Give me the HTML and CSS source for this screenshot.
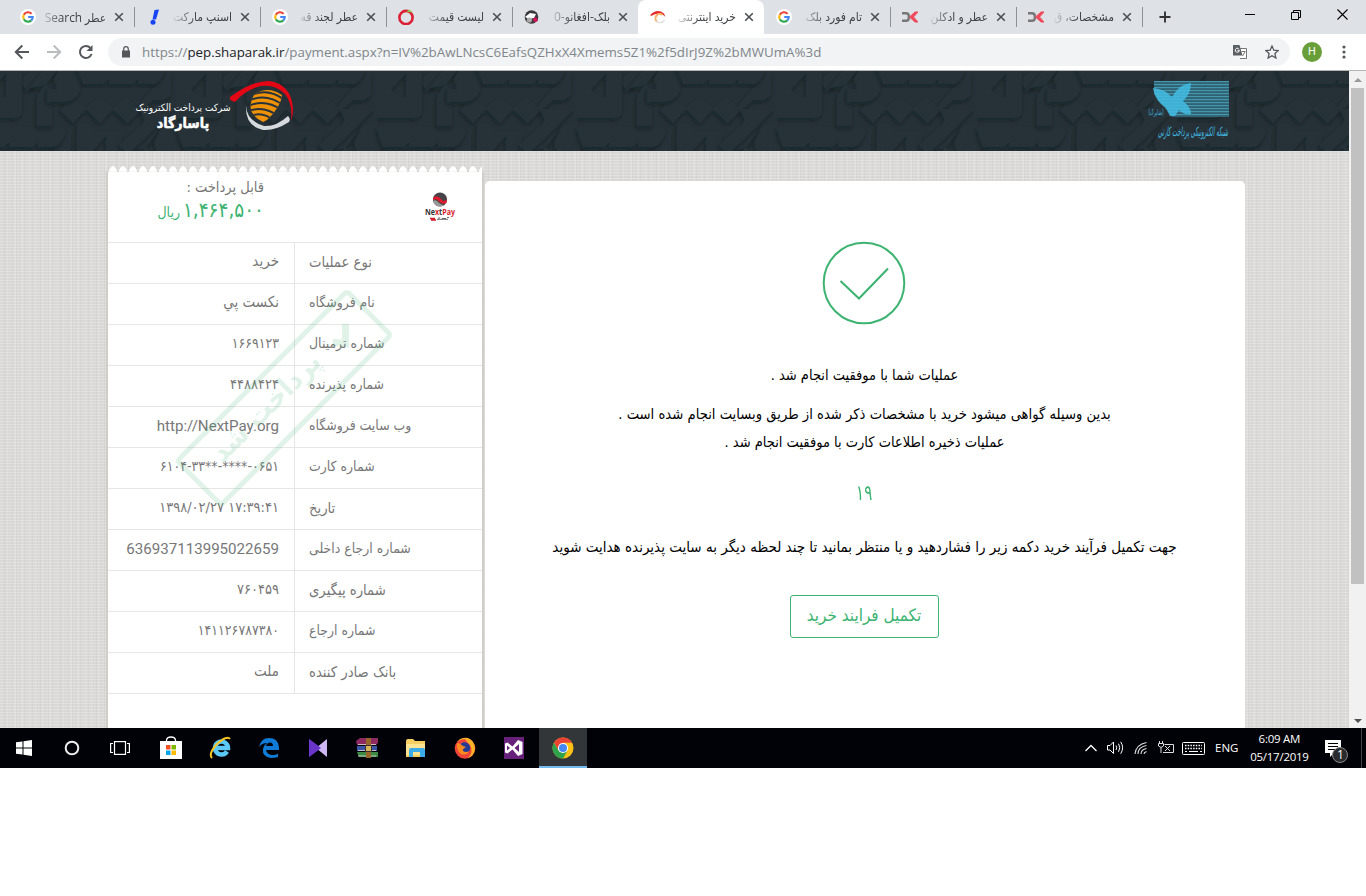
FILE: index.html
```html
<!DOCTYPE html>
<html lang="fa">
<head>
<meta charset="utf-8">
<title>خرید اینترنتی</title>
<link rel="stylesheet" href="styles.css">
</head>
<body>
<svg class="defs" width="0" height="0">
  <defs>
    <symbol id="google" viewBox="0 0 16 16">
      <circle cx="8" cy="8" r="8" fill="#fff"/>
      <g fill="none" stroke-width="2.2">
        <path d="M11.6 4.9A4.8 4.8 0 0 0 3.8 5.7" stroke="#ea4335"/>
        <path d="M3.8 5.7A4.8 4.8 0 0 0 3.8 10.3" stroke="#fbbc05"/>
        <path d="M3.8 10.3A4.8 4.8 0 0 0 11.3 11.4" stroke="#34a853"/>
        <path d="M11.3 11.4A4.8 4.8 0 0 0 12.7 8H8.2" stroke="#4285f4"/>
      </g>
    </symbol>
    <symbol id="digi" viewBox="0 0 16 12">
      <path d="M0 2.2H4Q6.8 2.2 6.8 5V7Q6.8 9.8 4 9.8H0" fill="none" stroke="#777" stroke-width="2.4"/>
      <path d="M7.5 6L13 1H16L11.5 6L16 11H13Z" fill="#f04a5d" stroke="#f04a5d"/>
    </symbol>
    <symbol id="close" viewBox="0 0 10 10"><path d="M1.2 1.2L8.8 8.8M8.8 1.2L1.2 8.8" stroke="#4c5054" stroke-width="1.6"/></symbol>
  </defs>
</svg>

<div class="tabs">
  <div class="tab"><svg class="fav"><use href="#google"/></svg><span class="title short-fade" dir="rtl">عطر Search</span><svg class="x"><use href="#close"/></svg></div>
  <div class="tab"><svg class="fav" viewBox="0 0 16 16"><path d="M8.500 1L13 .5L10 10.500H6.500Z" fill="#1744f5"/><circle cx="7" cy="13.300" r="2.500" fill="#1744f5"/></svg><span class="title" dir="rtl">اسنپ مارکت</span><svg class="x"><use href="#close"/></svg></div>
  <div class="tab"><svg class="fav"><use href="#google"/></svg><span class="title" dir="rtl">عطر لجند قه</span><svg class="x"><use href="#close"/></svg></div>
  <div class="tab"><svg class="fav" viewBox="0 0 16 16"><circle cx="8" cy="8.500" r="6.600" fill="none" stroke="#dc1f35" stroke-width="2.600"/><path d="M8.500 3L15 3.500L11 .5Z" fill="#8bc34a"/></svg><span class="title" dir="rtl">لیست قیمت</span><svg class="x"><use href="#close"/></svg></div>
  <div class="tab last-before"><svg class="fav" viewBox="0 0 16 16"><circle cx="7.5" cy="8" r="6.8" fill="#39393b"/><path d="M1 8L6 4L12 5L10 9L5 10Z" fill="#fff"/><circle cx="5.400" cy="11" r="2.600" fill="#aaa"/><path d="M9 10L12 8L14 12L10 13Z" fill="#e0105b"/></svg><span class="title" dir="rtl">بلک-افغانو-0</span><svg class="x"><use href="#close"/></svg></div>
  <div class="tab active"><svg class="fav" viewBox="0 0 16 16"><path d="M.2 6Q7-1 14 4.500L15.400 8Q10 1.500 1 7Z" fill="#e52b2c"/><path d="M7 12.500A4 4 0 1 1 12.500 6" fill="none" stroke="#f6b36b" stroke-width="2"/><path d="M6 12.500Q12 15.500 14.600 11" fill="none" stroke="#ddd" stroke-width="1.3"/></svg><span class="title" dir="rtl">خرید اینترنتی</span><svg class="x"><use href="#close"/></svg></div>
  <div class="tab"><svg class="fav"><use href="#google"/></svg><span class="title" dir="rtl">تام فورد بلک</span><svg class="x"><use href="#close"/></svg></div>
  <div class="tab"><svg class="fav wide"><use href="#digi"/></svg><span class="title" dir="rtl">عطر و ادکلن</span><svg class="x"><use href="#close"/></svg></div>
  <div class="tab"><svg class="fav wide"><use href="#digi"/></svg><span class="title" dir="rtl">مشخصات، ق</span><svg class="x"><use href="#close"/></svg></div>
  <svg class="plus" viewBox="0 0 12 12"><path d="M6 .5V11.5M.5 6H11.5" stroke="#333" stroke-width="1.9"/></svg>
  <div class="winctl">
    <svg width="10" height="10"><path d="M0 4.500H10" stroke="#000"/></svg>
    <svg width="10" height="10" fill="none" stroke="#000"><path d="M.5 2.5H7.5V9.500H.5ZM2.500 2.500V.5H9.500V7.500H7.500"/></svg>
    <svg width="11" height="11"><path d="M.5 .5L10.500 10.500M10.500 .5L.5 10.500" stroke="#000" stroke-width="1.1"/></svg>
  </div>
</div>

<div class="toolbar">
  <svg class="nav" viewBox="0 0 16 16"><path d="M15 8H2M8.300 1.500L1.800 8L8.300 14.500" stroke="#54575b"/></svg>
  <svg class="nav" viewBox="0 0 16 16"><path d="M1 8H14M7.700 1.500L14.200 8L7.700 14.500" stroke="#bbbcbe"/></svg>
  <svg class="nav" viewBox="0 0 16 16"><path d="M13.600 10A6 6 0 1 1 12.400 3.900" stroke="#54575b"/><path d="M14.500 1V7H8.500Z" fill="#54575b" stroke="none"/></svg>
  <div class="omni">
    <svg class="lock" viewBox="0 0 8 12"><path d="M0 4.500H8V11.500H0Z" fill="#54575b"/><path d="M1.700 5V3A2.300 2.300 0 0 1 6.300 3V5" fill="none" stroke="#54575b" stroke-width="1.200"/></svg>
    <span class="url">https://<b>pep.shaparak.ir</b>/payment.aspx?n=IV%2bAwLNcsC6EafsQZHxX4Xmems5Z1%2f5dIrJ9Z%2bMWUmA%3d</span>
    <svg class="trans" viewBox="0 0 14 14"><path d="M5 3.500H13.500V13.500H7" fill="#fff" stroke="#777"/><path d="M0 0H6.500L9.500 10.500H0Z" fill="#5c6064"/><path d="M6.500 5.300H4.500M6.300 5.300A2 2 0 1 1 5.600 3.700" stroke="#fff" fill="none"/><path d="M8.500 6.500H12.500M9.500 11L12 7" stroke="#777" fill="none"/></svg>
    <svg class="star" viewBox="0 0 14 14"><path d="M7 1L8.800 5.200L13.300 5.600L9.900 8.600L10.900 13L7 10.700L3.100 13L4.100 8.600L.7 5.600L5.200 5.200Z" fill="none" stroke="#54575b" stroke-width="1.300"/></svg>
  </div>
  <span class="avatar">H</span>
  <svg class="menu" width="4" height="14"><g fill="#54575b"><circle cx="2" cy="2" r="1.600"/><circle cx="2" cy="7" r="1.600"/><circle cx="2" cy="12" r="1.600"/></g></svg>
</div>

<div class="viewport">
  <div class="page">
    <header class="site-head">
      <svg class="ornament" width="1349" height="80">
        <defs>
          <filter id="lift" x="-10%" y="-10%" width="120%" height="130%"><feDropShadow dx="-1" dy="2.500" stdDeviation="2" flood-color="#10181c" flood-opacity=".42"/></filter>
          <g id="word" fill="#283339">
            <path filter="url(#lift)" d="M83 39L96 26L109 37L122 26L136 37L149 26L160 36L180 12L188 0H194V24Q190 29 182 29H176L150 52L136 38L123 52L109 38L96 52Z"/>
            <path filter="url(#lift)" d="M163 38H197L175 60L151 83L142 74L168 50Z"/>
            <path filter="url(#lift)" fill-rule="evenodd" d="M0-10H12L20-2H45V38Q45 47 36 47H0ZM13 19L29 2V26H22L13 18Z"/>
            <path filter="url(#lift)" d="M52 17L74-10H88L60 24V55H75V20L70 14Z"/>
            <path filter="url(#lift)" d="M70 31V18H80L77 8L86-10H99Q107 2 103 20Q97 31 86 31Z"/>
            <path filter="url(#lift)" d="M99-7H188V0Q182 13 176 13H161V8L156 13H132V8L127 13H106Z"/>
          </g>
          <pattern id="kufic" x="177" width="200" height="126" patternUnits="userSpaceOnUse">
            <rect width="200" height="126" fill="#263137"/>
            <use href="#word" x="-100" y="-63"/><use href="#word" x="100" y="-63"/>
            <use href="#word" x="-100" y="63"/><use href="#word" x="100" y="63"/>
            <use href="#word"/><use href="#word" x="-200"/>
          </pattern>
        </defs>
        <rect width="1349" height="80" fill="url(#kufic)"/>
      </svg>
      <div class="psp">
        <div class="psp-name" dir="rtl"><span>شرکت پرداخت الکترونیک</span><strong>پاسارگاد</strong></div>
        <svg class="psp-logo" viewBox="0 0 66 52">
          <path d="M1 17Q22 1 40 1Q62 4 64 28Q64 36 62 41Q64 24 56 14Q46 4 32 6Q16 10 6 22Q0 21 1 17Z" fill="#e30615"/>
          <path d="M17 26Q18 41 35 46Q47 47 59 36Q62 39 60 42Q46 51 34 50Q16 46 17 26Z" fill="#d7dadd"/>
          <clipPath id="globe"><path d="M25 15Q38 5 53 15Q52 27 38 40L34 42Q15 33 25 15Z"/></clipPath>
          <g clip-path="url(#globe)"><rect x="20" y="6" width="35" height="38" fill="#ef9208"/><path d="M20 16Q38 7 54 19M19 21Q38 12 55 26M19 26Q38 18 55 32M19 31Q36 25 52 38M22 36Q34 31 45 41" fill="none" stroke="#27333a" stroke-width="2"/></g>
        </svg>
      </div>
      <div class="shaparak">
        <svg width="82" height="62" viewBox="0 0 82 62">
          <defs><pattern id="bars" width="8" height="3" patternUnits="userSpaceOnUse"><rect width="8" height="1.600" fill="#4597ad"/><rect y="1.600" width="8" height="1.400" fill="#2d6374"/></pattern></defs>
          <rect x="6" y="0" width="75" height="36" fill="url(#bars)"/>
          <path d="M6 13L24 36H6Z" fill="#283339"/>
          <path d="M5 7Q17 8 24 16Q31 3 43 2Q43 13 35 20Q43 26 43 33Q35 34 31 29L27 35H22L18 27Q7 20 5 7Z" fill="#43bce3" opacity=".85"/>
          <text x="8" y="34" class="small-script" text-anchor="middle" textLength="15" lengthAdjust="spacingAndGlyphs">(شاپرک)</text>
          <text x="45" y="55" class="script" text-anchor="middle" textLength="70" lengthAdjust="spacingAndGlyphs">شبکه الکترونیکی پرداخت کارتی</text>
        </svg>
      </div>
    </header>

    <div class="columns">
      <aside class="receipt-wrap">
        <div class="teeth"></div>
        <div class="receipt">
          <div class="amount-row">
            <div class="amount" dir="rtl"><span class="cap">قابل پرداخت :</span><span class="sum">۱,۴۶۴,۵۰۰ <small>ریال</small></span></div>
            <svg class="nextpay" viewBox="0 0 32 30">
              <circle cx="16" cy="7.500" r="7" fill="#454547"/><path d="M9 6Q13 2 17 7Q20 11 23 7L22.500 11Q18 13 14.500 9Q12 6 9 8.500Z" fill="#e01a2c"/><path d="M9 9Q12 7 14 10Q17 13 20 13.200Q11 17 9 9Z" fill="#999"/>
              <text x="1" y="23" textLength="30" lengthAdjust="spacingAndGlyphs"><tspan fill="#333">Ne</tspan><tspan fill="#d81e2c">x</tspan><tspan fill="#333">t</tspan><tspan fill="#d81e2c">Pay</tspan></text>
              <path d="M6 26.500H11M7 28H12" stroke="#d81e2c" stroke-width="1.300"/><path d="M14 26H16M18 26.500H22M23 25.500H25M13 27.300H24" stroke="#444" stroke-width=".8"/>
            </svg>
          </div>
          <div class="row"><span class="val word">خرید</span><span class="lab wide-lab">نوع عملیات</span></div>
          <div class="row"><span class="val word">نکست پي</span><span class="lab">نام فروشگاه</span></div>
          <div class="row"><span class="val">۱۶۶۹۱۲۳</span><span class="lab">شماره ترمینال</span></div>
          <div class="row"><span class="val big">۴۴۸۸۴۲۴</span><span class="lab">شماره پذیرنده</span></div>
          <div class="row"><span class="val lat">http://NextPay.org</span><span class="lab">وب سایت فروشگاه</span></div>
          <div class="row"><span class="val">۶۱۰۴-۳۳**-****-۰۶۵۱</span><span class="lab">شماره کارت</span></div>
          <div class="row"><span class="val big">۱۳۹۸/۰۲/۲۷ ۱۷:۳۹:۴۱</span><span class="lab wide-lab">تاریخ</span></div>
          <div class="row"><span class="val lat">636937113995022659</span><span class="lab">شماره ارجاع داخلی</span></div>
          <div class="row"><span class="val big">۷۶۰۴۵۹</span><span class="lab wide-lab">شماره پیگیری</span></div>
          <div class="row"><span class="val">۱۴۱۱۲۶۷۸۷۳۸۰</span><span class="lab">شماره ارجاع</span></div>
          <div class="row"><span class="val word">ملت</span><span class="lab wide-lab">بانک صادر کننده</span></div>
          <svg class="stamp" viewBox="0 0 222 222">
            <g transform="translate(111 111) rotate(-45)" fill="none" stroke="#3cb371" stroke-width="5">
              <rect x="-120" y="-31" width="240" height="62" rx="3"/>
              <path d="M74-5L82 5L96-9" stroke-width="7"/>
              <text x="-19" y="3" text-anchor="middle" fill="#3cb371" stroke="none" textLength="142" lengthAdjust="spacingAndGlyphs">پرداخت شد</text>
            </g>
          </svg>
        </div>
      </aside>
      <main class="result" dir="rtl">
        <svg class="tick" viewBox="0 0 84 84"><circle cx="42" cy="42" r="40.300"/><path d="M18.500 40L37 57.500L66 27.500"/></svg>
        <p class="l1">عملیات شما با موفقیت انجام شد .</p>
        <p class="l2">بدین وسیله گواهی میشود خرید با مشخصات ذکر شده از طریق وبسایت انجام شده است .</p>
        <p class="l3">عملیات ذخیره اطلاعات کارت با موفقیت انجام شد .</p>
        <p class="count">۱۹</p>
        <p class="l4">جهت تکمیل فرآیند خرید دکمه زیر را فشاردهید و یا منتظر بمانید تا چند لحظه دیگر به سایت پذیرنده هدایت شوید</p>
        <button class="done">تکمیل فرایند خرید</button>
      </main>
    </div>
  </div>
  <div class="scroll"><i class="up"></i><div class="thumb"></div><i class="down"></i></div>
</div>

<div class="taskbar">
  <div class="apps">
    <span><svg width="16" height="16" fill="#fff"><path d="M0 2.300L6.500 1.400V7.500H0ZM7.500 1.200L16 0V7.500H7.500ZM0 8.500H6.500V14.600L0 13.700ZM7.500 8.500H16V16L7.500 14.800Z"/></svg></span>
    <span><svg width="16" height="16"><circle cx="8" cy="8" r="6.300" fill="none" stroke="#eee" stroke-width="2"/></svg></span>
    <span><svg width="20" height="14" fill="none" stroke="#fff" stroke-width="1.200"><rect x="4.500" y=".6" width="11" height="12.800"/><path d="M3 2.500H.6V11.500H3M17 2.500H19.400V11.500H17"/></svg></span>
    <span class="app"><svg width="22" height="24"><path d="M6.500 7V4Q7 1 11 1Q15 1 15.500 4V7" fill="none" stroke="#fff" stroke-width="1.300"/><path d="M0 5H22V23H0Z" fill="#fff"/><path d="M6 9H10.500V13.500H6Z" fill="#f25022"/><path d="M11.500 9H16V13.500H11.500Z" fill="#7fba00"/><path d="M6 14.500H10.500V19H6Z" fill="#00a4ef"/><path d="M11.500 14.500H16V19H11.500Z" fill="#ffb900"/></svg></span>
    <span class="app"><svg width="22" height="24" fill="none"><path d="M18 15.500A6.500 6.500 0 1 1 19 12H7" stroke="#5bc8f5" stroke-width="4.500"/><path d="M3 22Q-1 18 8 8Q18-1 21 3" stroke="#f5c625" stroke-width="2"/></svg></span>
    <span class="app"><svg width="20" height="20"><path d="M0 9Q2 0 10 0Q19 0 20 9V12H7Q8 17 14 17Q17 17 19 15.500V19Q16 20 12 20Q3 19 4 11Q5 7 8 5Q3 5 0 9ZM7 8H14Q14 4.500 11 4.500Q8 4.500 7 8Z" fill="#0f7bd6" fill-rule="evenodd"/></svg></span>
    <span class="app"><svg width="20" height="20"><path d="M1 1L13 10L1 19Z" fill="#6a35c9"/><path d="M19 1V19L8 10Z" fill="#cdb7f5"/><path d="M1 1L13 10L1 19Z" fill="#6a35c9"/></svg></span>
    <span class="app"><svg width="22" height="20"><path d="M0 3L4 0H22V5L20 7H1Z" fill="#8e2a62"/><path d="M1 8H21V13H1Z" fill="#3b53a5"/><path d="M1 14H22V19H3Z" fill="#3d8a45"/><path d="M2 6.500H20M2 12.500H20M2 18H20" stroke="#ddd" stroke-width=".8"/><path d="M10 0H15V20H10Z" fill="#98652b"/><rect x="9.500" y="7.500" width="6" height="6" fill="#d9b45a" stroke="#333"/></svg></span>
    <span class="app"><svg width="22" height="18"><path d="M1 2Q1 0 3 0H8L10 2H20V18H1Z" fill="#f6cf63"/><path d="M1 5H20V16H1Z" fill="#ffe394"/><path d="M4 18V11Q4 9 6 9H18Q20 9 20 11V18H15V13H8V18Z" fill="#3cabe6"/></svg></span>
    <span class="app"><svg width="22" height="22"><circle cx="11" cy="11.500" r="10.300" fill="#f0443a"/><path d="M3 5Q7 0 14 1Q21 4 21 12Q20 19 14 21Q20 15 16 8Q13 5 11 2Q5 3 3 5Z" fill="#ffb326"/><circle cx="10.500" cy="11" r="5.700" fill="#263c94"/><path d="M3 6Q6 6 9 9L12 10Q8 12 9 14Q12 16 15 14Q13 19 7 17Q2 13 3 6Z" fill="#ff8a1d"/></svg></span>
    <span class="app"><svg width="22" height="22"><rect width="20" height="22" x="1" fill="#68217a"/><path fill-rule="evenodd" d="M2 6.500L4.500 5.500L9.500 9.500L15 3L19.500 5V17L15 19L9.500 12.500L4.500 16.500L2 15.500ZM4 8.500V13.500L7 11ZM11.500 11L16 15V7Z" fill="#fff"/></svg></span>
    <span class="app current"><svg width="22" height="22"><circle cx="11" cy="11" r="10.500" fill="#fbc116"/><path d="M1.900 5.750A10.500 10.500 0 0 1 20.100 5.750H11L6.500 13.600Z" fill="#ea4335"/><path d="M1.900 5.750A10.500 10.500 0 0 0 11 21.500L15.500 13.600H6.500Z" fill="#2fa24c"/><circle cx="11" cy="11" r="5.100" fill="#fff"/><circle cx="11" cy="11" r="4" fill="#4587f3"/></svg></span>
  </div>
  <div class="tray">
    <svg width="12" height="8"><path d="M.5 7L6 1.500L11.500 7" fill="none" stroke="#fff" stroke-width="1.300"/></svg>
    <svg width="17" height="14" fill="none" stroke="#fff"><path d="M.5 4.500H3L6.500 1V12.500L3 9H.5ZM9 4.500Q10.500 6.700 9 9M11.500 2.700Q14 6.700 11.500 10.800M13.700 .8Q17.500 6.700 13.700 12.700"/></svg>
    <svg width="14" height="14" fill="none" stroke="#ddd" stroke-width="1.100"><path d="M10 13Q10 11.500 12.500 10.500M7 13Q7 8.500 12.500 7.500M4 13Q4 6 12.500 4.500M1 13Q2 3.500 12.500 1.500"/></svg>
    <svg width="17" height="14" fill="none" stroke="#ddd"><path d="M6.500 3.500H15.500V11.500H5M.5 2.500H5.500V5Q3 8 .5 5ZM1.500 0V2M4.500 0V2M3 6.500V12M7 5L12 10M12 5L7 10"/></svg>
    <svg width="24" height="13" fill="none" stroke="#fff"><rect x=".5" y=".5" width="22" height="12" rx="1"/><path d="M3 3.500H20M3 6.500H20" stroke-dasharray="1.500 1.200" stroke-width="1.300"/><path d="M3 9.500H5M7 9.500H16M18 9.500H20"/></svg>
    <span class="lang">ENG</span>
    <span class="clock">6:09 AM<br>05/17/2019</span>
    <span class="note"><svg width="16" height="17"><path d="M0 0H16V13H9L5 17V13H0Z" fill="#fff"/><path d="M3 3.500H13M3 6.500H13M3 9.500H10" stroke="#000"/></svg><b>1</b></span>
  </div>
</div>
</body>
</html>
```
FILE: styles.css
```css
* { box-sizing: border-box; }
body { margin: 0; width: 1366px; height: 896px; overflow: hidden; background: #fff; font-family: "DejaVu Sans Condensed", "DejaVu Sans", sans-serif; }
svg { display: block; flex: none; }
.defs { position: absolute; }
p { margin: 0; }

.tabs { display: flex; height: 34px; padding-left: 8px; background: #dee1e6; }
.tab { display: flex; align-items: center; width: 126px; height: 34px; padding: 0 10px 0 12px; position: relative; }
.tab:not(.active):not(.last-before)::after { content: ""; position: absolute; right: -1px; top: 7px; width: 1px; height: 20px; background: #8d9094; }
.tab.active { background: #fff; border-radius: 8px 8px 0 0; }
.fav { width: 16px; height: 16px; }
.fav.wide { height: 12px; }
.title { flex: 1; margin: 0 8px 0 8px; height: 20px; line-height: 20px; overflow: hidden; white-space: nowrap; font-size: 12px; color: #3f4246; font-family: "Open Sans", "DejaVu Sans Condensed", sans-serif; -webkit-mask-image: linear-gradient(to right, transparent, #000 26px); mask-image: linear-gradient(to right, transparent, #000 26px); }
.short-fade { font-size: 11.800px; -webkit-mask-image: linear-gradient(to right, rgba(0,0,0,.2), #000 18px); mask-image: linear-gradient(to right, rgba(0,0,0,.2), #000 18px); }
.x { width: 10px; height: 10px; }
.plus { width: 12px; height: 12px; margin: 11px 0 0 17px; }
.winctl { display: flex; align-items: center; gap: 36px; height: 29px; margin-left: auto; padding-right: 18px; }

.toolbar { display: flex; align-items: center; height: 36px; padding-left: 14px; background: #fff; }
.nav { width: 16px; height: 16px; margin-right: 16px; fill: none; stroke-width: 2; }
.omni { display: flex; align-items: center; width: 1182px; height: 28px; margin-left: -2px; padding: 0 11px 0 14px; border-radius: 14px; background: #f1f3f4; }
.lock { width: 8px; height: 12px; }
.url { margin-left: 12px; font: 13.340px/20px "Open Sans", sans-serif; color: #80868b; white-space: nowrap; }
.url b { font-weight: 400; color: #202124; }
.trans { width: 14px; height: 14px; margin-left: auto; }
.star { width: 14px; height: 14px; margin-left: 18px; }
.avatar { width: 20px; height: 20px; margin-left: 12px; border-radius: 50%; background: #689f38; color: #fff; font: 11px/20px Roboto, sans-serif; text-align: center; }
.menu { margin-left: 20px; }

.viewport { display: flex; height: 658px; border-top: 1px solid #b5b5b5; }
.page { width: 1349px; background-color: #d9d8d6; background-image: repeating-linear-gradient(0deg, rgba(255,255,255,.22) 0 1px, transparent 1px 3px), repeating-linear-gradient(90deg, rgba(120,115,110,.05) 0 1px, transparent 1px 4px), repeating-linear-gradient(90deg, rgba(255,255,255,.12) 0 2px, transparent 2px 7px); overflow: hidden; }
.site-head { display: flex; justify-content: space-between; height: 80px; padding: 10px 119px 0 134px; position: relative; background: #263137; }
.ornament { position: absolute; left: 0; top: 0; }
.psp, .shaparak { position: relative; }
.psp { display: flex; }
.psp-name { display: flex; flex-direction: column; align-items: center; width: 98px; padding-top: 18px; color: #fff; font-size: 10px; line-height: 17px; white-space: nowrap; }
.psp-name strong { font-size: 14px; line-height: 15px; color: #fff; -webkit-text-stroke: .5px #fff; }
.psp-logo { width: 66px; height: 52px; margin: -1px 0 0 -3px; }
.small-script { font-size: 8px; fill: #43bce3; }
.script { font-size: 13px; font-style: italic; fill: #43bce3; }

.columns { display: flex; padding-left: 108px; gap: 3px; }
.receipt-wrap { width: 374px; padding-top: 15px; }
.teeth { height: 6px; background: radial-gradient(ellipse 4px 6px at 5px 6px, #fff 92%, transparent) 0 0 / 10px 6px repeat-x; }
.receipt { position: relative; height: 560px; background: #fff; box-shadow: 2px 0 0 #cfcec9, -2px 0 1px #cfcec9; }
.amount-row { display: flex; justify-content: space-between; height: 71px; padding: 0 26px 0 50px; border-bottom: 1px solid #e6e6e6; }
.amount { display: flex; flex-direction: column; width: 106px; color: #777; white-space: nowrap; }
.cap { font-size: 14.500px; line-height: 30px; }
.sum { font-size: 20.500px; line-height: 17px; color: #3cb371; word-spacing: -3px; }
.sum small { font-size: 14px; }
.nextpay { width: 32px; height: 30px; margin-top: 20px; font: 700 9px "Open Sans", sans-serif; }
.row { display: flex; height: 41px; border-bottom: 1px solid #e6e6e6; color: #777; font-size: 14px; line-height: 37px; white-space: nowrap; }
.val { width: 187px; padding-right: 15px; text-align: right; border-right: 1px solid #e6e6e6; }
.val.big { font-size: 14.500px; }
.val.word { font-size: 15px; }
.val.lat { font-family: Roboto, sans-serif; font-size: 15.100px; line-height: 39px; }
.lab { padding-left: 14px; font-size: 13.900px; }
.wide-lab { font-size: 14.700px; }
.stamp { position: absolute; left: 65px; top: 115px; width: 222px; height: 222px; opacity: .15; font: 700 28px "DejaVu Sans Condensed", sans-serif; }

.result { display: flex; flex-direction: column; align-items: center; width: 760px; height: 560px; margin-top: 30px; padding: 60px 1px 0 0; border-radius: 5px 5px 0 0; background: #fff; color: #000; font-size: 14.500px; white-space: nowrap; }
.tick { width: 84px; height: 84px; margin-right: 1px; fill: none; stroke: #3cb371; stroke-width: 2; }
.l1 { line-height: 28px; margin-top: 36px; }
.l2 { line-height: 28px; margin-top: 11px; font-size: 14.650px; }
.l3 { line-height: 28px; }
.count { margin-top: 21px; font-size: 21px; line-height: 32px; color: #3cb371; transform: scaleX(.8); }
.l4 { margin-top: 22px; line-height: 32px; font-size: 15px; }
.done { width: 149px; height: 43px; margin: 32px 1px 0 0; padding: 0 0 4px; border: 1px solid #3cb371; border-radius: 3px; background: #fff; color: #3cb371; font: 17px "DejaVu Sans Condensed", sans-serif; }

.scroll { display: flex; flex-direction: column; align-items: center; width: 17px; background: #f1f1f1; }
.up, .down { border: 4px solid transparent; }
.up { margin: 3px 0 6px; border-bottom-color: #999; }
.thumb { width: 13px; height: 496px; background: #c1c1c1; }
.down { margin-top: auto; margin-bottom: 1px; border-top-color: #505050; }

.taskbar { display: flex; justify-content: space-between; height: 40px; background: #000207; }
.apps { display: flex; }
.apps span { display: flex; align-items: center; justify-content: center; width: 48px; height: 40px; }
.apps .app { width: 49.100px; position: relative; left: 2px; }
.apps .current { width: 48px; background: #333639; border-bottom: 2px solid #76b9ed; padding-top: 2px; }
.tray { display: flex; align-items: center; box-sizing: content-box; width: 276px; margin-right: 4px; border-right: 1px solid #444; color: #fff; font: 12px/18px "Open Sans", sans-serif; }
.tray svg { margin-right: 10px; }
.tray svg:nth-child(4) { margin-right: 7px; }
.lang { margin-left: -1px; font-size: 11.500px; }
.clock { width: 62px; margin-left: 10px; text-align: center; font-size: 11.500px; letter-spacing: -.25px; white-space: nowrap; }
.note { position: relative; margin-left: 15px; }
.note b { position: absolute; left: 7px; top: 7px; width: 16px; height: 16px; border: 1px solid #888; border-radius: 50%; background: #292b2e; font: 12px/14px "Open Sans", sans-serif; text-align: center; }
```
